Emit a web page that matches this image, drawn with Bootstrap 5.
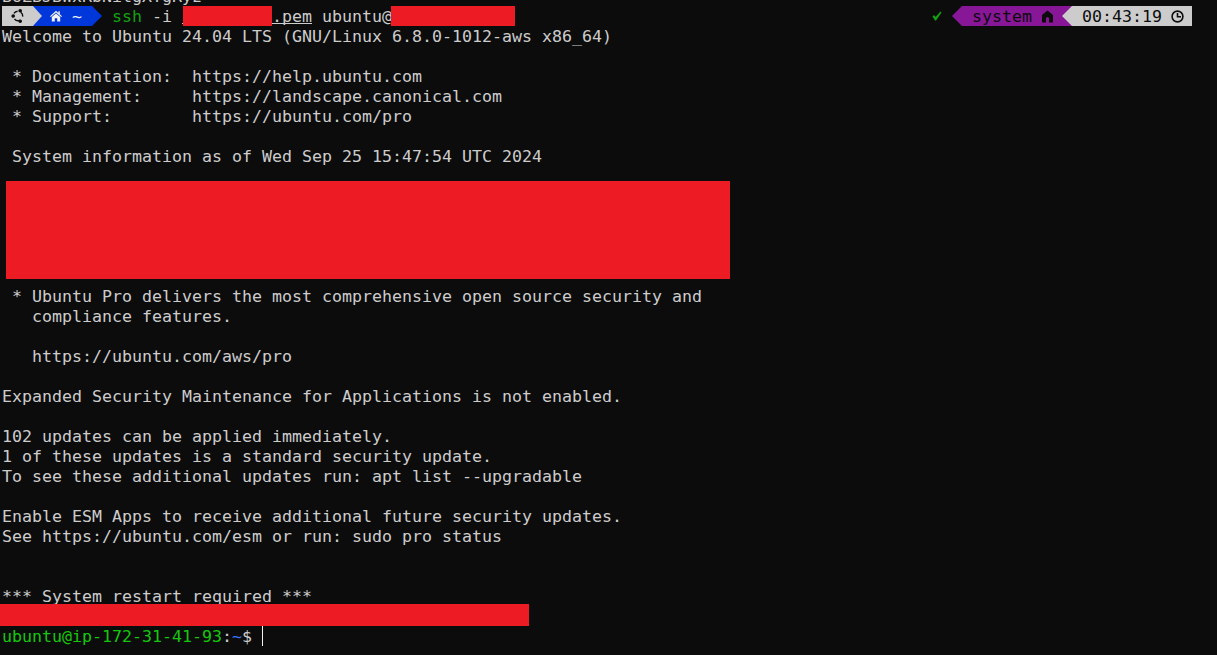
<!DOCTYPE html>
<html lang="en">
<head>
<meta charset="utf-8">
<title>Terminal</title>
<link rel="stylesheet" href="https://cdn.jsdelivr.net/npm/bootstrap@5.3.0/dist/css/bootstrap.min.css">
<style>
html, body { background: #0c0c0c; height: 100%; overflow: hidden; }
.term { font-family: "DejaVu Sans Mono", monospace; font-size: 16.61px; line-height: 22px; color: #cccccc; height: 669px; overflow: hidden; padding: 0 25px 0 2px; margin-top: -14px; }
.ln { height: 20px; white-space: pre; }
.seg-row { height: 20px; white-space: pre; }
.seg { height: 20px; flex: none; }
.seg > span { align-self: flex-start; }
.seg-light { background: #cccccc; color: #0c0c0c; }
.seg-blue { background: #0037da; color: #f2f2f2; }
.seg-purple { background: #881798; color: #0c0c0c; }
.g { color: #13a10e; }
.gb { color: #16c60c; }
.bl { color: #3b78ff; }
.red-big { background: #ed1c24; height: 98px; width: 724px; margin: 15px 0 7px 4px; }
.red-low { background: #ed1c24; height: 22px; width: 529px; margin: -2px 0 0 -2px; position: relative; }
.red-in { background: #ed1c24; display: inline-block; height: 20px; vertical-align: top; }
.red-key { width: 89px; margin-left: 1px; }
.red-host { width: 124px; margin-left: -1px; }
.keyfile { display: inline-block; width: 130px; height: 20px; vertical-align: top; background: linear-gradient(#cccccc, #cccccc) 0 17px / 100% 1px no-repeat; }
.cursor { display: inline-block; width: 1px; height: 20px; background: #f2f2f2; vertical-align: top; }
.w-light { width: 31px; }
.w-blue { width: 59px; }
.w-purple { width: 100px; }
.w-time { width: 130px; }
.gap-ssh { margin-left: 10px; }
.gap-check { margin-right: 10px; }
.pad-sys { padding-left: 10px; }
.pad-home { padding-left: 17px; }
.pad-logo { padding-left: 9px; }
.tilde { margin-left: 10px; }
.ic-home { margin-left: 9px; }
.ic-clock { margin-left: 9px; }
.clock-txt { margin-left: 10px; }
svg { display: block; flex: none; }
</style>
</head>
<body>
<div class="term">
<div class="ln">BUZBJBWxRbNitgXTgRyz</div>
<div class="seg-row d-flex">
  <div class="seg seg-light w-light d-flex align-items-center pad-logo">
    <svg width="14" height="14" viewBox="0 0 14 14" fill="none" stroke="#0c0c0c" stroke-width="1.4"><path d="M3 4.400A4.700 4.700 0 0 1 6.600 2.300M9.800 3.200A4.700 4.700 0 0 1 11.700 7.600M9.400 11A4.700 4.700 0 0 1 3.500 10"/><circle cx="2.200" cy="7" r="1.100" fill="#0c0c0c"/><circle cx="9.200" cy="1.800" r="1.100" fill="#0c0c0c"/><circle cx="9.200" cy="12.200" r="1.100" fill="#0c0c0c"/></svg>
  </div>
  <div class="seg seg-blue w-blue d-flex align-items-center pad-home position-relative">
    <svg width="12" height="12" viewBox="0 0 12 12" fill="#f2f2f2"><path d="M6 .8 0 6.200l.8.800L6 2.400 11.200 7l.8-.8L9.800 4.200V1.200H8.400v1.700zM1.800 7v4.600h3V8.200h2.400v3.400h3V7L6 3.400z"/></svg>
    <span class="tilde">~</span>
    <svg class="position-absolute top-0 start-0" width="9" height="20" viewBox="0 0 9 20"><polygon points="0,0 9,10 0,20" fill="#cccccc"/></svg>
  </div>
  <svg width="10" height="20" viewBox="0 0 10 20"><polygon points="0,0 10,10 0,20" fill="#0037da"/></svg>
  <div class="gap-ssh"><span class="g">ssh</span> -i <span class="keyfile"><span class="red-in red-key"></span>.pem</span> ubuntu@<span class="red-in red-host"></span></div>
  <div class="ms-auto d-flex">
    <span class="gap-check d-flex align-items-center"><svg width="10" height="10" viewBox="0 0 10 10"><path d="M.5 5.500 2 4l1.500 2L8.500.5 9.500 1.500 4 9.500H3z" fill="#13a10e"/></svg></span>
    <svg width="10" height="20" viewBox="0 0 10 20"><polygon points="10,0 0,10 10,20" fill="#881798"/></svg>
    <div class="seg seg-purple w-purple d-flex align-items-center pad-sys"><span>system</span>
      <svg class="ic-home" width="13" height="13" viewBox="0 0 13 13" fill="#0c0c0c"><path d="M6.500.5 1 5v7.500h4V8.500a1.500 1.500 0 0 1 3 0v4h4V5z"/></svg>
    </div>
    <div class="seg seg-light w-time d-flex align-items-center">
      <svg width="10" height="20" viewBox="0 0 10 20"><rect width="10" height="20" fill="#881798"/><polygon points="10,0 0,10 10,20" fill="#cccccc"/></svg>
      <span class="clock-txt">00:43:19</span>
      <svg class="ic-clock" width="13" height="13" viewBox="0 0 13 13" fill="none" stroke="#0c0c0c" stroke-width="1.600"><circle cx="6.500" cy="6.500" r="5.400"/><path d="M6.500 3v3.700H10"/></svg>
    </div>
  </div>
</div>
<div class="ln">Welcome to Ubuntu 24.04 LTS (GNU/Linux 6.8.0-1012-aws x86_64)</div>
<div class="ln"></div>
<div class="ln"> * Documentation:  https://help.ubuntu.com</div>
<div class="ln"> * Management:     https://landscape.canonical.com</div>
<div class="ln"> * Support:        https://ubuntu.com/pro</div>
<div class="ln"></div>
<div class="ln"> System information as of Wed Sep 25 15:47:54 UTC 2024</div>
<div class="red-big"></div>
<div class="ln"> * Ubuntu Pro delivers the most comprehensive open source security and</div>
<div class="ln">   compliance features.</div>
<div class="ln"></div>
<div class="ln">   https://ubuntu.com/aws/pro</div>
<div class="ln"></div>
<div class="ln">Expanded Security Maintenance for Applications is not enabled.</div>
<div class="ln"></div>
<div class="ln">102 updates can be applied immediately.</div>
<div class="ln">1 of these updates is a standard security update.</div>
<div class="ln">To see these additional updates run: apt list --upgradable</div>
<div class="ln"></div>
<div class="ln">Enable ESM Apps to receive additional future security updates.</div>
<div class="ln">See https://ubuntu.com/esm or run: sudo pro status</div>
<div class="ln"></div>
<div class="ln"></div>
<div class="ln">*** System restart required ***</div>
<div class="red-low"></div>
<div class="ln"><span class="gb">ubuntu@ip-172-31-41-93</span>:<span class="bl">~</span>$ <span class="cursor"></span></div>
</div>
</body>
</html>
